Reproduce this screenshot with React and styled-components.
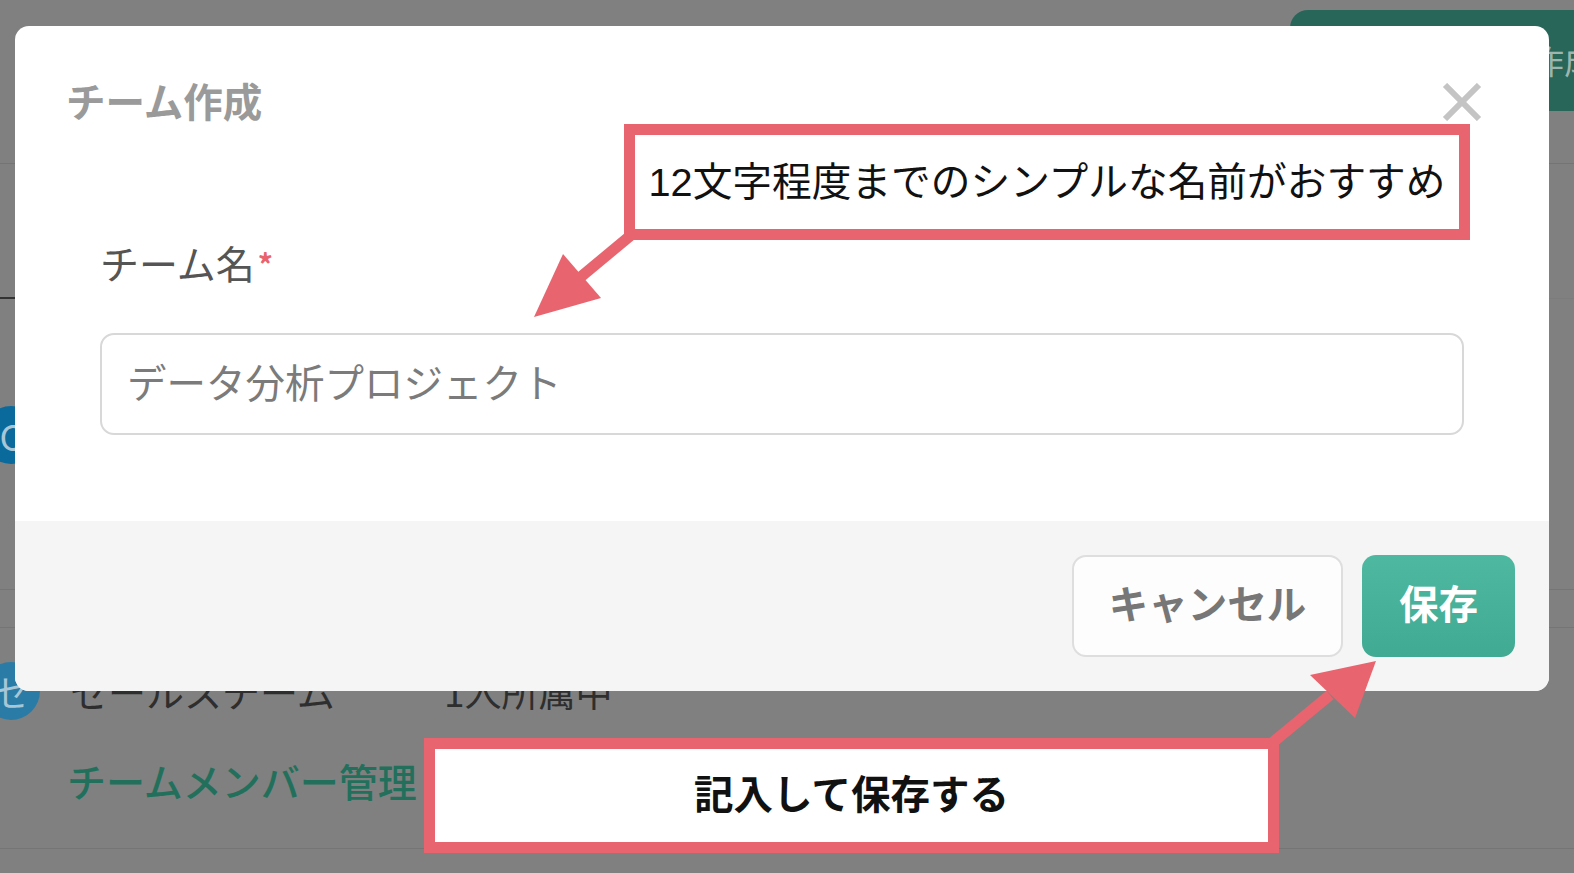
import styled, { createGlobalStyle } from 'styled-components';

const GlobalStyle = createGlobalStyle`
  html, body {
    margin:0;
    padding:0;
    background:#808080;
    overflow:hidden;
  }
  * {
    box-sizing:border-box;
  }
  body {
    font-family:"Noto Sans CJK JP","Noto Sans",sans-serif;
  }
`;

const Page = styled.div`
  position:relative;
  width:1574px;
  height:873px;
  overflow:hidden;
  background:#808080;
`;

const Header = styled.div`
  height:164px;
  padding-top:10px;
  display:flex;
  justify-content:flex-end;
  border-bottom:1px solid #747474;
`;

const CreateButton = styled.div`
  width:284px;
  height:101px;
  padding:25px 0 0 241px;
  background:#29665a;
  border-radius:18px 0 0 18px;
  color:#9db5ae;
  font-size:33px;
  line-height:50px;
  white-space:nowrap;
  overflow:hidden;
`;

const Tabs = styled.div`
  height:135px;
  border-bottom:1px solid #7c7c7c;
`;

const TabMark = styled.div`
  width:40px;
  height:135px;
  border-bottom:2px solid #333;
`;

const TeamRow = styled.div`
  height:${(props) => props.height}px;
  display:flex;
  align-items:flex-start;
  padding-top:${(props) => props.pad}px;
  border-bottom:1px solid ${(props) => props.rule};
`;

const Avatar = styled.div`
  width:58px;
  height:58px;
  margin-left:-18px;
  border-radius:50%;
  background:${(props) => props.color};
  display:flex;
  align-items:center;
  justify-content:center;
  color:#a9c6d6;
  font-size:36px;
  line-height:58px;
`;

const TeamLabel = styled.div`
  margin-left:30px;
  width:374px;
  font-size:38px;
  line-height:58px;
  color:#2e2e2e;
  white-space:nowrap;
`;

const TeamCount = styled.div`
  font-size:37px;
  line-height:58px;
  color:#2e2e2e;
  white-space:nowrap;
`;

const MemberLink = styled.div`
  height:52px;
  padding-left:67px;
  font-size:39px;
  font-weight:500;
  line-height:52px;
  color:#22705c;
  white-space:nowrap;
`;

const BottomRule = styled.div`
  height:1px;
  margin-top:42px;
  background:#757575;
`;

const Modal = styled.div`
  position:absolute;
  left:15px;
  top:26px;
  width:1534px;
  height:665px;
  background:#fff;
  border-radius:14px;
  display:flex;
  flex-direction:column;
  overflow:hidden;
`;

const ModalBody = styled.div`
  height:495px;
  position:relative;
  padding:45px 51px 0 51px;
`;

const ModalTitle = styled.h2`
  margin:0;
  font-size:39.5px;
  font-weight:700;
  line-height:58px;
  color:#9a9a9a;
`;

const CloseIcon = styled.svg`
  position:absolute;
  right:67px;
  top:57px;
  width:40px;
  height:38px;
`;

const Field = styled.div`
  margin-top:106px;
  padding:0 34px;
`;

const FieldLabel = styled.label`
  display:flex;
  align-items:flex-start;
  height:99px;
  font-size:39px;
  line-height:54px;
  color:#555;
`;

const Required = styled.span`
  color:#e8636e;
  font-size:30px;
  font-weight:700;
  line-height:56px;
  margin-left:3px;
`;

const NameInput = styled.div`
  width:1364px;
  height:102px;
  margin-top:-1px;
  border:2px solid #d8d8d8;
  border-radius:14px;
  padding:0 0 7px 25px;
  display:flex;
  align-items:center;
  font-size:39.5px;
  color:#7b7b7b;
`;

const ModalFooter = styled.div`
  flex:1;
  background:#f5f5f5;
  display:flex;
  justify-content:flex-end;
  gap:19px;
  padding:34px 34px 0 0;
`;

const FooterButton = styled.div`
  width:${(props) => props.width}px;
  height:102px;
  border-radius:14px;
  display:flex;
  align-items:center;
  justify-content:center;
  font-size:39.5px;
  font-weight:700;
  padding-bottom:9px;
`;

const CancelButton = styled(FooterButton)`
  background:#fdfdfd;
  border:2px solid #dedede;
  color:#777;
`;

const SaveButton = styled(FooterButton)`
  background:linear-gradient(#4eb8a1,#41aa93);
  color:#fff;
`;

const Callout = styled.div`
  position:absolute;
  left:${(props) => props.left}px;
  top:${(props) => props.top}px;
  width:${(props) => props.width}px;
  height:${(props) => props.height}px;
  border:11px solid #e8646e;
  background:#fff;
  display:flex;
  align-items:center;
  justify-content:center;
  color:#111;
  font-family:"Liberation Sans","Noto Sans CJK JP",sans-serif;
  font-size:${(props) => props.size}px;
  font-weight:${(props) => props.weight};
  white-space:nowrap;
  padding-bottom:8px;
`;

const ArrowLayer = styled.svg`
  position:absolute;
  left:0;
  top:0;
  width:1574px;
  height:873px;
  pointer-events:none;
`;

const App = () => {
  return (
    <Page>
      <GlobalStyle />
      <Header>
        <CreateButton>作成</CreateButton>
      </Header>
      <Tabs>
        <TabMark />
      </Tabs>
      <TeamRow height={291} pad={107} rule="#757575">
        <Avatar color="#0a6a9c">C</Avatar>
        <TeamLabel>営業チーム</TeamLabel>
      </TeamRow>
      <TeamRow height={38} pad={0} rule="#757575" />
      <TeamRow height={126} pad={34} rule="transparent">
        <Avatar color="#2a7ca6">セ</Avatar>
        <TeamLabel>セールスチーム</TeamLabel>
        <TeamCount>1人所属中</TeamCount>
      </TeamRow>
      <MemberLink>チームメンバー管理</MemberLink>
      <BottomRule />

      <Modal>
        <ModalBody>
          <ModalTitle>チーム作成</ModalTitle>
          <CloseIcon viewBox="0 0 40 38">
            <path d="M3 2 L37 36 M37 2 L3 36" stroke="#c4c4c4" strokeWidth="6" fill="none" />
          </CloseIcon>
          <Field>
            <FieldLabel>
              チーム名<Required>*</Required>
            </FieldLabel>
            <NameInput>データ分析プロジェクト</NameInput>
          </Field>
        </ModalBody>
        <ModalFooter>
          <CancelButton width={271}>キャンセル</CancelButton>
          <SaveButton width={153}>保存</SaveButton>
        </ModalFooter>
      </Modal>

      <ArrowLayer viewBox="0 0 1574 873">
        <path d="M630 236 L565 290" stroke="#e8646e" strokeWidth="11" fill="none" />
        <polygon points="534,317 563,254 601,298" fill="#e8646e" />
        <path d="M1272 743 L1330 695" stroke="#e8646e" strokeWidth="11" fill="none" />
        <polygon points="1376,661 1310,675 1355,718" fill="#e8646e" />
      </ArrowLayer>

      <Callout left={624} top={124} width={846} height={116} size={39.7} weight={400}>
        12文字程度までのシンプルな名前がおすすめ
      </Callout>
      <Callout left={424} top={738} width={855} height={115} size={39.5} weight={700}>
        記入して保存する
      </Callout>
    </Page>
  )
}

export default App
